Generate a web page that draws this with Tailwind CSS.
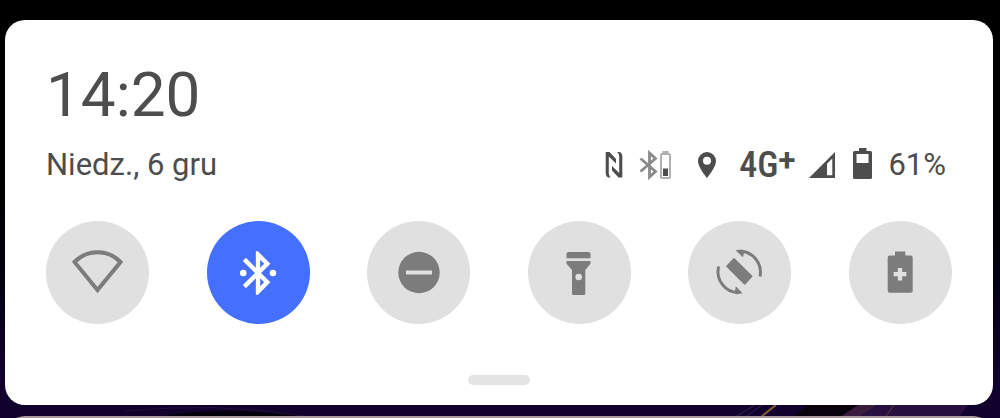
<!DOCTYPE html>
<html lang="pl">
<head>
  <meta charset="UTF-8">
  <meta name="viewport" content="width=device-width, initial-scale=1.0">
  <title>Szybkie ustawienia</title>
  <script src="https://cdn.jsdelivr.net/npm/@tailwindcss/browser@4"></script>
</head>
<body class="min-h-screen bg-linear-to-b from-black from-30% to-[#10022c] to-90% font-[Roboto,sans-serif] text-[#4d4d4d]">
  <div class="flex h-screen flex-col overflow-hidden pt-5 pr-[7px] pl-[5px]">

    <!-- Quick settings panel -->
    <main class="shrink-0 rounded-[20px] bg-white px-[41px] pt-[43px] pb-5">
      <h1 class="text-[62px] leading-[64px]">14:20</h1>

      <div class="mt-5 flex items-center justify-between text-[31px] leading-9">
        <p>Niedz., 6 gru</p>

        <!-- Status icons -->
        <div class="flex items-center pr-1.5">
          <svg class="mr-4 h-7 w-[18px]" viewBox="0 0 18 28" fill="#4d4d4d" role="img" aria-label="NFC">
            <path d="M.7 1H4.500L11 8V12.500L3.800 5.500V22.500Q4 25 5.800 26.500H3Q.7 25 .7 22.500z"/>
            <path d="M17.300 26.500H13.500L7 19.500V15L14.200 22V5Q14 2.500 12.200 1H15Q17.300 2.500 17.300 5z"/>
          </svg>
          <svg class="mr-[27px] h-[30px] w-8" viewBox="0 0 32 30" role="img" aria-label="Bluetooth">
            <path d="M1.500 8.500L16.500 21.500L10.500 27V3L16.500 8.500L1.500 21.500" fill="none" stroke="#8a8a8a" stroke-width="2.800"/>
            <path d="M23.500 1h6v2.500h-6z" fill="#b0b0b0"/>
            <rect x="22" y="4" width="9" height="24" rx="1" fill="none" stroke="#b0b0b0" stroke-width="2"/>
            <path d="M24 18.500h5V26h-5z" fill="#4d4d4d"/>
          </svg>
          <svg class="mr-[23px] h-[26px] w-[18px]" viewBox="0 0 18 26" role="img" aria-label="Lokalizacja">
            <path fill="#4d4d4d" fill-rule="evenodd" d="M9 0a9 9 0 0 0-9 9c0 6.500 9 17 9 17s9-10.500 9-17a9 9 0 0 0-9-9zm0 4.800a4 4 0 1 1 0 8 4 4 0 0 1 0-8z"/>
          </svg>
          <span class="mr-3.5 flex font-['Roboto_Condensed','Liberation_Sans_Narrow',Roboto,sans-serif] text-[36px] font-medium">4G<span class="-mt-1 font-[Roboto] text-[31px] font-bold">+</span></span>
          <svg class="mr-[18px] h-[26px] w-[26px]" viewBox="0 0 26 26" role="img" aria-label="Zasięg">
            <path fill="#4d4d4d" fill-rule="evenodd" d="M26 0v26H0zM23.300 6.500l-5.300 5.300v11.500h5.300z"/>
          </svg>
          <svg class="mr-4 h-8 w-[19px] -translate-y-0.5" viewBox="0 0 19 32" role="img" aria-label="Bateria">
            <path fill="#4d4d4d" fill-rule="evenodd" d="M6 1h7.500v3H17.500a1.500 1.500 0 0 1 1.500 1.500v25a1.500 1.500 0 0 1-1.500 1.500h-16A1.500 1.500 0 0 1 0 30.500v-25A1.500 1.500 0 0 1 1.500 4H6zM3.500 7v9h12V7z"/>
          </svg>
          <span>61%</span>
        </div>
      </div>

      <!-- Toggles -->
      <div class="mt-[38px] flex justify-between text-[#7c7c7c]">
        <button type="button" aria-label="Wi-Fi" class="flex size-[103px] items-center justify-center rounded-full bg-[#e0e0e0]">
          <svg class="size-[52px]" viewBox="0 0 52 52" fill="none" stroke="currentColor" stroke-width="4">
            <path d="M2.500 15A32 32 0 0 1 48.500 15L25.500 43z"/>
          </svg>
        </button>
        <button type="button" aria-label="Bluetooth" aria-pressed="true" class="flex size-[103px] items-center justify-center rounded-full bg-[#4570ff] text-white">
          <svg class="size-[52px]" viewBox="0 0 24 24" fill="currentColor">
            <path d="M17.710 7.710L12 2h-1v7.590L6.410 5 5 6.410 10.590 12 5 17.590 6.410 19 11 14.410V22h1l5.710-5.710-4.300-4.290 4.300-4.290zM13 5.830l1.880 1.880L13 9.590V5.830zm1.880 10.460L13 18.170v-3.760l1.880 1.880z"/>
            <circle cx="5.200" cy="12" r="1.500"/>
            <circle cx="18.900" cy="12" r="1.500"/>
          </svg>
        </button>
        <button type="button" aria-label="Nie przeszkadzać" class="flex size-[103px] items-center justify-center rounded-full bg-[#e0e0e0]">
          <svg class="size-[52px]" viewBox="0 0 52 52">
            <circle cx="26" cy="25.500" r="20.700" fill="currentColor"/>
            <path d="M13 23.500h26v4H13z" fill="#e0e0e0"/>
          </svg>
        </button>
        <button type="button" aria-label="Latarka" class="flex size-[103px] items-center justify-center rounded-full bg-[#e0e0e0]">
          <svg class="size-[52px]" viewBox="0 0 52 52" fill="currentColor">
            <path d="M15.500 5h20a2 2 0 0 1 2 2v4.300h-24V7a2 2 0 0 1 2-2z"/>
            <path d="M13.500 14h24v2.700L32.300 23v23.500a1.500 1.500 0 0 1-1.500 1.500H20.500a1.500 1.500 0 0 1-1.500-1.500V23l-5.500-6.300z"/>
            <circle cx="25.700" cy="30" r="3.300" fill="#e0e0e0"/>
          </svg>
        </button>
        <button type="button" aria-label="Autoobracanie" class="flex size-[103px] items-center justify-center rounded-full bg-[#e0e0e0]">
          <svg class="size-[52px]" viewBox="0 0 52 52" fill="currentColor">
            <path stroke="currentColor" stroke-width="1.500" stroke-linejoin="round" d="M20 11.700L12.900 19.300 30.700 37 37.700 29.300z"/>
            <path fill="none" stroke="currentColor" stroke-width="3" d="M27 4.300A21 21 0 0 1 46 29.500M4.700 19.500A21 21 0 0 0 24 45.700"/>
            <path d="M21.500 3.300L28 2.500l2 3-1 4.800zM28.500 46.200l-6 1-1.500-3 .8-5z"/>
          </svg>
        </button>
        <button type="button" aria-label="Oszczędzanie baterii" class="flex size-[103px] items-center justify-center rounded-full bg-[#e0e0e0]">
          <svg class="size-[52px]" viewBox="0 0 52 52">
            <path fill="currentColor" d="M21 4.500h10.300v4h5.400a2 2 0 0 1 2 2v33.300a2 2 0 0 1-2 2h-21a2 2 0 0 1-2-2V10.500a2 2 0 0 1 2-2H21z"/>
            <path d="M19.700 27.200h12.600M26 20.900V33.500" stroke="#e0e0e0" stroke-width="4.300"/>
          </svg>
        </button>
      </div>

      <div class="mx-auto mt-[51px] h-2.5 w-[62px] rounded-[5px] bg-[#e4e4e4]"></div>
    </main>

    <!-- Wallpaper between the cards -->
    <svg class="h-[11px] w-full shrink-0" viewBox="0 0 988 11" preserveAspectRatio="none">
      <path d="M160 11Q215 1 300 11z" fill="#03000c"/>
      <path d="M120 6Q210-3 300 11" fill="none" stroke="#241038"/>
      <path d="M803 0L790 11H842L853 0z" fill="#08020c"/>
      <path d="M853 0L837 11H857L872 0z" fill="#3b1c3f"/>
      <path d="M872 0L855 11H955L963 0z" fill="#27103f"/>
      <path d="M750 0L732 11M757 0L742 11" stroke="#3b2050"/>
      <path d="M771 0L757 11" stroke="#8c5c38" stroke-width="2"/>
      <path d="M889 0L881 11" stroke="#584038"/>
    </svg>

    <!-- Notification card peeking in from below -->
    <section class="h-10 shrink-0 rounded-t-[20px] bg-[#a89a9a]" aria-label="Powiadomienia"></section>
  </div>
</body>
</html>
